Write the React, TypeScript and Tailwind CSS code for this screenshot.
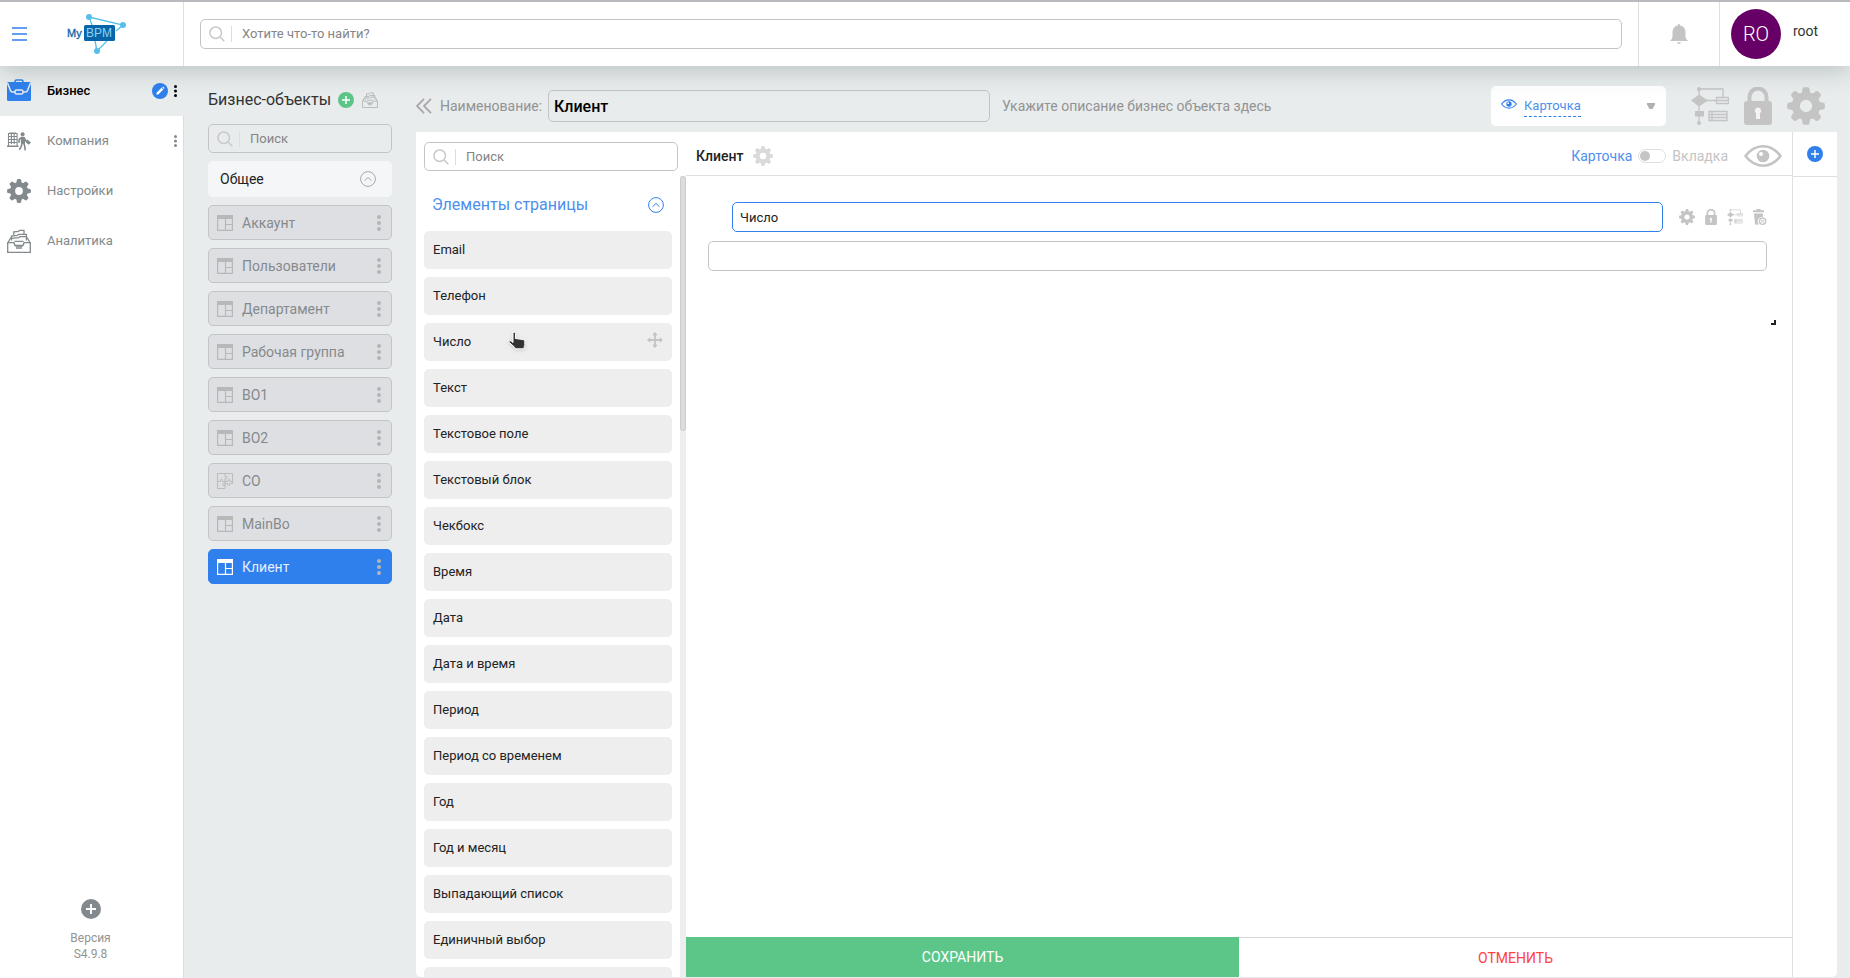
import type { ReactNode } from "react";

type IconProps = { className?: string };

const MENU = [
  { label: "Бизнес", icon: BriefcaseIcon, active: true, dots: true },
  { label: "Компания", icon: CompanyIcon, active: false, dots: true },
  { label: "Настройки", icon: GearIcon, active: false, dots: false },
  { label: "Аналитика", icon: ArchiveIcon, active: false, dots: false },
];

const OBJECTS = [
  "Аккаунт",
  "Пользователи",
  "Департамент",
  "Рабочая группа",
  "BO1",
  "BO2",
  "CO",
  "MainBo",
  "Клиент",
];

const ELEMENTS = [
  "Email",
  "Телефон",
  "Число",
  "Текст",
  "Текстовое поле",
  "Текстовый блок",
  "Чекбокс",
  "Время",
  "Дата",
  "Дата и время",
  "Период",
  "Период со временем",
  "Год",
  "Год и месяц",
  "Выпадающий список",
  "Единичный выбор",
];

/* ---------- icons ---------- */

function GearIcon({ className }: IconProps) {
  return (
    <svg viewBox="0 0 24 24" className={className} fill="currentColor" aria-hidden="true">
      <circle cx="12" cy="12" r="6.4" fill="none" stroke="currentColor" strokeWidth="5" />
      {[0, 45, 90, 135].map((a) => (
        <g key={a} transform={`rotate(${a} 12 12)`}>
          <path d="M9.2 4.5 9.9 1q.2-.9 1.1-.9h2q.9 0 1.1.9l.7 3.5z" />
          <path d="m9.2 19.5.7 3.5q.2.9 1.1.9h2q.9 0 1.1-.9l.7-3.5z" />
        </g>
      ))}
    </svg>
  );
}

function BriefcaseIcon({ className }: IconProps) {
  return (
    <svg viewBox="0 0 24 24" className={className} aria-hidden="true">
      <path d="M8 4V2.500Q8 1 9.500 1h5Q16 1 16 2.500V4" fill="none" stroke="#2f80ed" strokeWidth="1.500" />
      <path d="M1.500 3h21Q24 3 24 4.500v16q0 1.500-1.500 1.500h-21Q0 22 0 20.500v-16Q0 3 1.500 3z" fill="#2f80ed" />
      <path d="M.5 4 3.500 11.500q.5 1.500 2 1.500H18.500q1.500 0 2-1.500L23.500 4" fill="none" stroke="#e8eced" strokeWidth="1.500" />
      <rect x="8" y="11" width="8" height="4" rx="1.600" fill="#2f80ed" stroke="#e8eced" strokeWidth="1.500" />
    </svg>
  );
}

function CompanyIcon({ className }: IconProps) {
  return (
    <svg viewBox="0 0 24 24" className={className} fill="currentColor" aria-hidden="true">
      <path d="M0 16.500h11.500V18H0zM2.500 3.500h6.500V4.500H2.500z" />
      <path d="M1.500 17V4.500h8.600V17M4.400 4.500V15M7.200 4.500V15M1.500 7.500h8.600M1.500 10.500h8.600M1.500 13.500h8.600" fill="none" stroke="currentColor" strokeWidth="1.100" />
      <circle cx="15.600" cy="5.200" r="2" />
      <path d="M14 7.800h3.400l.8 5-.4 2.200h-3.600l-.4-2.600z" />
      <path d="m14 8.600-1.900 2v3.200M17.200 8.600l1.600 3.200 2.200.6M15 14.500l-.8 3.200-1.900 3M17 14.500l.8 3 .4 3.800" fill="none" stroke="currentColor" strokeWidth="1.600" />
      <path d="M20.300 10.600 24 13.400l-2.200 2.400-3-2.200z" />
    </svg>
  );
}

function ArchiveIcon({ className }: IconProps) {
  return (
    <svg viewBox="0 0 24 24" className={className} fill="none" stroke="currentColor" strokeWidth="1.300" aria-hidden="true">
      <path d="M.7 13.700H7l1 2.800h8l1-2.800h6.300v9.600H.7z" />
      <path d="M1 13.700 3.800 8.500M23 13.700 20.200 8.500" />
      <path d="M4.500 11.500V7l6-.6.9-1h8v6.200" />
      <path d="m4.800 9.300 7-.6.9-1h6.500M6.800 6.300V2.800l4.700-.4.900-1H17v4" />
      <path d="M7.500 12.300h9M8.500 17h7M9 19h6" />
    </svg>
  );
}

function SearchIcon({ className }: IconProps) {
  return (
    <svg viewBox="0 0 16 16" className={className} fill="none" stroke="currentColor" strokeWidth="1.500" aria-hidden="true">
      <circle cx="6.700" cy="6.700" r="5.800" />
      <path d="m11 11 4.300 4.300" />
    </svg>
  );
}

function PlusCircle({ className }: IconProps) {
  return (
    <svg viewBox="0 0 16 16" className={className} aria-hidden="true">
      <circle cx="8" cy="8" r="8" fill="currentColor" />
      <path d="M8 4v8M4 8h8" stroke="#fff" strokeWidth="1.500" />
    </svg>
  );
}

function PencilCircle({ className }: IconProps) {
  return (
    <svg viewBox="0 0 16 16" className={className} aria-hidden="true">
      <circle cx="8" cy="8" r="8" fill="#2f80ed" />
      <path d="m4.200 11.800.6-2.400 4.700-4.700 1.800 1.800-4.700 4.700zM10.200 4.200l.8-.6 1.500 1.500-.6.8z" fill="#fff" />
    </svg>
  );
}

function Dots({ className }: IconProps) {
  return (
    <svg viewBox="0 0 4 16" className={className} fill="currentColor" aria-hidden="true">
      <circle cx="2" cy="2" r="2" />
      <circle cx="2" cy="8" r="2" />
      <circle cx="2" cy="14" r="2" />
    </svg>
  );
}

function TableIcon({ className }: IconProps) {
  return (
    <svg viewBox="0 0 16 16" className={className} fill="none" stroke="currentColor" strokeWidth="1.200" aria-hidden="true">
      <path d="M.6.600h14.800v14.800H.6zM8.500 4v12M8.500 9.500H16" />
      <path d="M0 0h16v4H0z" fill="currentColor" stroke="none" />
    </svg>
  );
}

function PuzzleIcon({ className }: IconProps) {
  return (
    <svg viewBox="0 0 16 16" className={className} fill="none" stroke="currentColor" strokeWidth=".9" aria-hidden="true">
      <path d="M.5.500h15v10h-3q.5 2-1 2t-1-2H8v5H.5z" />
      <path d="M.5 8.500h3Q3 6 4.500 6t1 2.500H8v-3q2.500.5 2.500-1T8 3.500v-3M8 8.500v2q-2.500-.5-2.500 1t2.500 1M8 8.500h3q-.5-2 1-2t1 2h2.500" />
    </svg>
  );
}

function ChevronCircle({ className }: IconProps) {
  return (
    <svg viewBox="0 0 16 16" className={className} fill="none" stroke="currentColor" aria-hidden="true">
      <circle cx="8" cy="8" r="7.400" />
      <path d="M4.500 9.800 8 6.400l3.500 3.400" />
    </svg>
  );
}

function EyeIcon({ className }: IconProps) {
  return (
    <svg viewBox="0 0 38 22" className={className} aria-hidden="true">
      <path d="M1.500 11Q9 1.300 19 1.300T36.500 11Q29 20.700 19 20.700T1.500 11z" fill="none" stroke="currentColor" strokeWidth="2.600" />
      <circle cx="19" cy="11" r="6.300" fill="currentColor" />
      <circle cx="17" cy="9" r="2" fill="#fff" />
    </svg>
  );
}

function LockIcon({ className }: IconProps) {
  return (
    <svg viewBox="0 0 28 38" className={className} aria-hidden="true">
      <path d="M5.500 16V10a8.500 8.500 0 0 1 17 0v6" fill="none" stroke="currentColor" strokeWidth="4" />
      <rect x="0" y="14" width="28" height="24" rx="3" fill="currentColor" />
      <path d="M14 20.500a3.200 3.200 0 0 1 2 5.700V32h-4v-5.800a3.200 3.200 0 0 1 2-5.700z" fill="#fff" opacity=".8" />
    </svg>
  );
}

function FlowIcon({ className }: IconProps) {
  return (
    <svg viewBox="0 0 38 38" className={className} fill="none" stroke="currentColor" strokeWidth="1.300" aria-hidden="true">
      <path d="M8 2v34M8 2h24v9M15 13.500h10" />
      <g fill="currentColor" stroke="none">
        <path d="M8 7.500 17 13.500 8 19.500 0 13.500z" />
        <path d="M4 24h9v5.500H4z" />
        <circle cx="8" cy="2" r="2" />
        <circle cx="8" cy="36" r="2" />
      </g>
      <path d="M25.500 10.500H37.500v6h-12zM25.500 13.500h12" />
      <path d="M18 24.500h18v9H18zM18 27.500h18M18 30.500h18M21 24.500v9" />
    </svg>
  );
}

function TrashIcon({ className }: IconProps) {
  return (
    <svg viewBox="0 0 16 16" className={className} fill="currentColor" aria-hidden="true">
      <path d="M2 1.300h3.500V0h4v1.300H13v2H2z" />
      <path d="M3 4.500h9l-.3 3.500a4.300 4.300 0 0 0-3.400 7.500H4z" />
      <circle cx="11.600" cy="12.200" r="3.100" fill="none" stroke="currentColor" strokeWidth="1.300" />
      <path d="m10.300 10.900 2.600 2.600m0-2.600-2.600 2.600" stroke="currentColor" />
    </svg>
  );
}

function MoveIcon({ className }: IconProps) {
  return (
    <svg viewBox="0 0 16 16" className={className} aria-hidden="true">
      <path d="M8 2v12M2 8h12" stroke="currentColor" strokeWidth="1.800" />
      <path d="m8 0 2.800 3.200H5.200zM8 16l2.800-3.200H5.200zM0 8l3.200-2.800v5.600zM16 8l-3.200-2.800v5.600z" fill="currentColor" />
    </svg>
  );
}

function BellIcon({ className }: IconProps) {
  return (
    <svg viewBox="0 0 18 20" className={className} fill="currentColor" aria-hidden="true">
      <path d="M9 0q1 0 1.200 1.400Q15.500 2.600 15.500 8v4.500q0 2.500 2.500 4.500H0q2.500-2 2.500-4.500V8q0-5.400 5.300-6.600Q8 0 9 0zM7 18.200h4Q10.700 20 9 20t-2-1.800z" />
    </svg>
  );
}

function HandCursor({ className }: IconProps) {
  return (
    <svg viewBox="0 0 18 19" className={className} aria-hidden="true">
      <path
        d="M5 2q0-1.300 1.200-1.300T7.500 2v5l7.500 1q1.800.3 1.800 2v3q0 1-.6 2v2.300H6.800V16L1.400 11q-.8-1 0-1.600.8-.5 1.800.2L5 11z"
        fill="#333"
        stroke="#fff"
        strokeWidth="1"
      />
    </svg>
  );
}

function Logo({ className }: IconProps) {
  return (
    <svg viewBox="0 0 60 42" className={className} aria-hidden="true">
      <g fill="none" stroke="#56c0ea" strokeWidth="1.300">
        <path d="m22 4 34 8-7 6M22 4l3 8M30 38l-2-10M30 38l10-10" />
      </g>
      <g fill="#56c0ea">
        <circle cx="22" cy="4" r="3" />
        <circle cx="56" cy="12" r="3" />
        <circle cx="30" cy="38" r="3" />
      </g>
      <rect x="17" y="12" width="31" height="16" rx="1.500" fill="#0865a8" />
      <text x="0" y="24" fontSize="11" fontFamily="Liberation Sans, sans-serif" fill="#0865a8" stroke="#0865a8" strokeWidth=".3">
        My
      </text>
      <text x="19" y="24" fontSize="12" fontFamily="Liberation Sans, sans-serif" fill="#8fd4f5">
        BPM
      </text>
    </svg>
  );
}

/* ---------- shared ---------- */

function SearchBox({ placeholder, className }: { placeholder: string; className: string }) {
  return (
    <label className={`flex items-center rounded-[5px] border border-[#c4c4c4] pl-2 ${className}`}>
      <SearchIcon className="size-4 shrink-0 text-[#c8c8c8]" />
      <span className="ml-1.5 h-4 border-l border-[#dedede]" />
      <input
        type="search"
        aria-label={placeholder}
        placeholder={placeholder}
        className="ml-2.5 w-full min-w-0 bg-transparent text-[13px] outline-none placeholder:text-[#858585]"
      />
    </label>
  );
}

function IconButton({ label, className = "", children }: { label: string; className?: string; children: ReactNode }) {
  return (
    <button type="button" aria-label={label} className={`shrink-0 ${className}`}>
      {children}
    </button>
  );
}

/* ---------- sections ---------- */

function TopBar() {
  return (
    <header className="relative z-10 flex h-[66px] shrink-0 border-t-2 border-[#b8b8bd] bg-white shadow-[0_4px_24px_rgba(60,75,75,0.28)]">
      <div className="flex w-[184px] shrink-0 items-center border-r border-[#dfdfdf] pl-3">
        <IconButton label="Меню">
          <svg viewBox="0 0 15 14" className="h-3.5 w-[15px]" stroke="#2f80ed" strokeWidth="1.600" aria-hidden="true">
            <path d="M0 1h15M0 7h15M0 13h15" />
          </svg>
        </IconButton>
        <a href="#" aria-label="MyBPM" className="ml-10">
          <Logo className="h-[42px] w-[60px]" />
        </a>
      </div>
      <div className="flex flex-1 items-center px-4">
        <SearchBox placeholder="Хотите что-то найти?" className="h-[30px] w-full" />
      </div>
      <div className="flex w-[82px] shrink-0 items-center justify-center border-x border-[#dfdfdf]">
        <IconButton label="Уведомления">
          <BellIcon className="h-5 w-[18px] text-[#c4c4c4]" />
        </IconButton>
      </div>
      <div className="flex w-[130px] shrink-0 items-center gap-3 pl-[11px]">
        <span className="flex size-[50px] items-center justify-center rounded-full bg-[#660066] text-xl font-light text-white">
          RO
        </span>
        <span className="pb-1.5 text-sm text-[#333]">root</span>
      </div>
    </header>
  );
}

function Sidebar() {
  return (
    <nav className="flex w-[184px] shrink-0 flex-col border-r border-[#dadddd] bg-white">
      {MENU.map(({ label, icon: Icon, active, dots }) => (
        <div
          key={label}
          className={`flex h-[50px] items-center pl-[7px] ${active ? "-mr-px bg-[#e8eced] pr-[7px] text-black" : "pr-1.5 text-[#828a8d]"}`}
        >
          <a href="#" className="flex flex-1 items-center gap-4">
            <Icon className="size-6" />
            <span className={`text-[13px] ${active ? "font-medium" : ""}`}>{label}</span>
          </a>
          {active && (
            <IconButton label="Редактировать" className="mr-1.5">
              <PencilCircle className="size-4" />
            </IconButton>
          )}
          {dots && (
            <IconButton label="Ещё">
              <Dots className="h-3 w-[3px]" />
            </IconButton>
          )}
        </div>
      ))}
      <div className="mt-auto flex flex-col items-center pr-0.5 pb-4 text-xs text-[#939393]">
        <IconButton label="Добавить" className="mb-[11px]">
          <PlusCircle className="size-5 text-[#828a8d]" />
        </IconButton>
        <span>Версия</span>
        <span>S4.9.8</span>
      </div>
    </nav>
  );
}

function ObjectsPanel() {
  return (
    <section className="ml-6 w-[184px] shrink-0 pt-[22px]">
      <div className="flex h-6 items-center">
        <h2 className="text-base text-[#333]">Бизнес-объекты</h2>
        <IconButton label="Создать" className="ml-[7px]">
          <PlusCircle className="size-4 text-[#5cc689]" />
        </IconButton>
        <IconButton label="Архив" className="ml-2">
          <ArchiveIcon className="size-4 text-[#b0b4b5]" />
        </IconButton>
      </div>
      <SearchBox placeholder="Поиск" className="mt-3 h-[29px]" />
      <button
        type="button"
        className="mt-2 flex h-9 w-full items-center justify-between rounded-[5px] bg-[#f5f6f8] pr-4 pl-3 text-sm text-[#222]"
      >
        Общее
        <ChevronCircle className="size-4 text-[#a8a8a8]" />
      </button>
      <ul className="mt-2 flex flex-col gap-2">
        {OBJECTS.map((name) => {
          const active = name === "Клиент";
          const Icon = name === "CO" ? PuzzleIcon : TableIcon;
          return (
            <li
              key={name}
              className={`flex h-[35px] items-center rounded-[5px] border pr-2.5 pl-2 text-sm ${
                active ? "border-[#2f80ed] bg-[#2f80ed] text-[#e4eefc]" : "border-[#c4c4c4] bg-[#dedfe3] text-[#858a8d]"
              }`}
            >
              <a href="#" className="flex flex-1 items-center gap-[9px]">
                <Icon className={`size-4 ${active ? "text-white" : "text-[#b8b8b8]"}`} />
                {name}
              </a>
              <IconButton label={`Меню ${name}`}>
                <Dots className="h-4 w-1 text-[#b5b5b5]" />
              </IconButton>
            </li>
          );
        })}
      </ul>
    </section>
  );
}

function EditorHead() {
  return (
    <div className="flex h-[66px] shrink-0 items-center pt-[14px] pr-3">
      <IconButton label="Свернуть">
        <svg viewBox="0 0 16 16" className="size-4" fill="none" stroke="#a8a8a8" strokeWidth="1.800" aria-hidden="true">
          <path d="M8 .800 1 8l7 7.200M15 .800 8 8l7 7.200" />
        </svg>
      </IconButton>
      <label htmlFor="bo-name" className="ml-2 w-[108px] shrink-0 text-sm text-[#939393]">
        Наименование:
      </label>
      <input
        id="bo-name"
        defaultValue="Клиент"
        className="h-8 w-[442px] rounded-[5px] border border-[#c0c4c4] bg-transparent px-[5px] text-base font-medium text-black outline-none"
      />
      <p className="ml-3 text-sm text-[#939393]">Укажите описание бизнес объекта здесь</p>
      <div className="ml-auto flex h-10 w-[175px] shrink-0 items-center rounded-[5px] bg-white px-2.5">
        <EyeIcon className="mb-1 h-2.5 w-4 text-[#2f80ed]" />
        <select
          aria-label="Вид"
          className="ml-[7px] appearance-none border-b border-dashed border-[#2f80ed] bg-transparent text-[13px] leading-5 text-[#4c90ee] outline-none"
        >
          <option>Карточка</option>
        </select>
        <svg viewBox="0 0 10 8" className="ml-auto h-2 w-2.5" fill="#b0b0b0" aria-hidden="true">
          <path d="M1 1h8v1.500L6.500 7h-3L1 2.500z" />
        </svg>
      </div>
      <div className="ml-[25px] flex shrink-0 items-center gap-[14px] text-[#c4c4c4]">
        <IconButton label="Процессы">
          <FlowIcon className="size-[38px]" />
        </IconButton>
        <IconButton label="Доступ">
          <LockIcon className="h-[38px] w-[30px]" />
        </IconButton>
        <IconButton label="Настройки объекта">
          <GearIcon className="size-[38px]" />
        </IconButton>
      </div>
    </div>
  );
}

function ElementsPanel() {
  return (
    <aside className="flex w-[270px] shrink-0 flex-col">
      <SearchBox placeholder="Поиск" className="mt-2.5 mr-2 ml-2 h-[29px] shrink-0" />
      <div className="mt-[5px] flex min-h-0 flex-1">
        <div className="flex-1 overflow-hidden px-2">
          <div className="flex h-[55px] items-center justify-between pt-0.5 pr-2 pl-2">
            <h3 className="text-base text-[#4c90ee]">Элементы страницы</h3>
            <IconButton label="Свернуть группу">
              <ChevronCircle className="size-4 text-[#2f80ed]" />
            </IconButton>
          </div>
          <ul className="flex flex-col gap-2">
            {ELEMENTS.map((name) => (
              <li key={name} className="relative flex h-[38px] shrink-0 items-center rounded-[5px] bg-[#eee] px-[9px] text-[13px] text-[#222]">
                {name}
                {name === "Число" && (
                  <>
                    <MoveIcon className="mb-1 ml-auto size-4 text-[#c4c4c4]" />
                    <HandCursor className="absolute top-2 left-[84px] h-5 w-[18px] drop-shadow" />
                  </>
                )}
              </li>
            ))}
            <li className="h-[38px] shrink-0 rounded-[5px] bg-[#eee]" />
          </ul>
        </div>
        <div className="w-1.5 bg-[#eee]">
          <div className="h-[255px] rounded-[3px] border border-[#ccc] bg-[#dcdcdc]" />
        </div>
      </div>
    </aside>
  );
}

function Canvas() {
  return (
    <section className="flex min-w-0 flex-1 flex-col">
      <div className="flex h-11 shrink-0 items-center border-b border-[#dfdfdf] px-2.5 pt-1">
        <h3 className="text-sm font-medium text-[#222]">Клиент</h3>
        <IconButton label="Настройки карточки" className="ml-2.5">
          <GearIcon className="size-5 text-[#dadada]" />
        </IconButton>
        <label className="ml-auto flex items-center gap-1.5 text-sm">
          <span className="text-[#4c90ee]">Карточка</span>
          <input type="checkbox" className="peer sr-only" />
          <span className="flex h-3.5 w-7 items-center rounded-full border border-[#dfdfdf] bg-white px-px peer-checked:justify-end">
            <span className="size-2.5 rounded-full bg-[#c4c4c4]" />
          </span>
          <span className="text-[#c4c4c4]">Вкладка</span>
        </label>
        <IconButton label="Предпросмотр" className="ml-4">
          <EyeIcon className="h-[22px] w-[38px] text-[#c4c4c4]" />
        </IconButton>
      </div>
      <div className="flex-1 pt-[26px] pr-4 pl-[22px]">
        <div className="flex items-center pl-6">
          <input
            aria-label="Название поля"
            defaultValue="Число"
            className="h-[30px] min-w-0 flex-1 rounded-[5px] border border-[#2f80ed] px-[7px] text-[13px] text-[#222] outline-none"
          />
          <div className="mr-[9px] ml-4 flex items-center gap-2 text-[#c4c4c4]">
            <IconButton label="Настройки поля">
              <GearIcon className="size-4" />
            </IconButton>
            <IconButton label="Доступ к полю" className="flex w-4 justify-center">
              <LockIcon className="h-4 w-3" />
            </IconButton>
            <IconButton label="Процессы поля">
              <FlowIcon className="size-4" />
            </IconButton>
            <IconButton label="Удалить поле">
              <TrashIcon className="size-4" />
            </IconButton>
          </div>
        </div>
        <div className="mt-[9px] pr-[9px]">
          <input aria-label="Число" className="h-[30px] w-full rounded-[5px] border border-[#c4c4c4] px-2 text-[13px] outline-none" />
        </div>
        {/* resize handle */}
        <div className="mt-[49px] ml-auto size-[5px] border-r-2 border-b-2 border-[#222]" />
      </div>
      <div className="flex h-10 shrink-0 text-sm">
        <button type="button" className="flex-1 bg-[#5cc689] text-white">
          СОХРАНИТЬ
        </button>
        <button type="button" className="flex-1 border-t border-[#d8d8d8] text-[#ff4242]">
          ОТМЕНИТЬ
        </button>
      </div>
    </section>
  );
}

export default function App() {
  return (
    <div className="flex h-screen flex-col overflow-hidden bg-[#e8eced] font-[Roboto,sans-serif]">
      <TopBar />
      <div className="flex min-h-0 flex-1">
        <Sidebar />
        <ObjectsPanel />
        <main className="mr-[13px] mb-px ml-6 flex min-w-0 flex-1 flex-col">
          <EditorHead />
          <div className="flex min-h-0 flex-1 overflow-hidden rounded-b-[5px] bg-white">
            <ElementsPanel />
            <Canvas />
            <div className="w-[45px] shrink-0 border-l border-[#dfdfdf]">
              <div className="flex h-[45px] items-center justify-center border-b border-[#dfdfdf]">
                <IconButton label="Добавить вкладку">
                  <PlusCircle className="size-4 text-[#2f80ed]" />
                </IconButton>
              </div>
            </div>
          </div>
        </main>
      </div>
    </div>
  );
}
